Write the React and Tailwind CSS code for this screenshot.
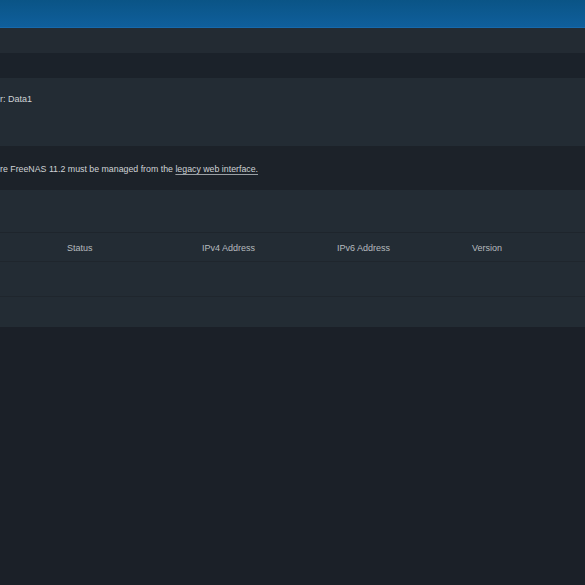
import React from 'react';

const columns = ['Status', 'IPv4 Address', 'IPv6 Address', 'Version'];

const App = () => {
    return (
        <div className="min-h-[585px] bg-[#1b2028] text-[9px] text-[#cfd3d6]" style={{ fontFamily: '"Liberation Sans", Arial, sans-serif' }}>
            {/* top bar */}
            <div className="h-[28px] bg-gradient-to-b from-[#0a5486] to-[#0f5f9c] border-b border-[#1769ab]" />

            {/* toolbar */}
            <div className="h-[25px] bg-[#232b33]" />
            <div className="h-[25px] bg-[#1b222a]" />

            {/* jail manager card */}
            <div className="h-[68px] bg-[#232c34] pt-[16px]">
                <div className="leading-[10px]">r: Data1</div>
            </div>

            {/* warning strip */}
            <div className="h-[44px] bg-[#1c2229] flex items-center pt-[1px]">
                <div className="leading-[10px] text-[8.8px]">
                    re FreeNAS 11.2 must be managed from the{' '}
                    <span className="underline decoration-[#9aa0a5] underline-offset-2">legacy web interface.</span>
                </div>
            </div>

            {/* table card */}
            <div className="bg-[#232c34]">
                <div className="h-[43px] border-b border-[#1e252c]" />
                <div className="h-[29px] flex items-center pl-[67px] pt-[4px] border-b border-[#1f262d] text-[#b6bbbf]">
                    {columns.map((c) => (
                        <div key={c} className="w-[135px] shrink-0">{c}</div>
                    ))}
                </div>
                <div className="h-[35px] border-b border-[#1f262d]" />
                <div className="h-[30px]" />
            </div>
        </div>
    );
};

export default App;
